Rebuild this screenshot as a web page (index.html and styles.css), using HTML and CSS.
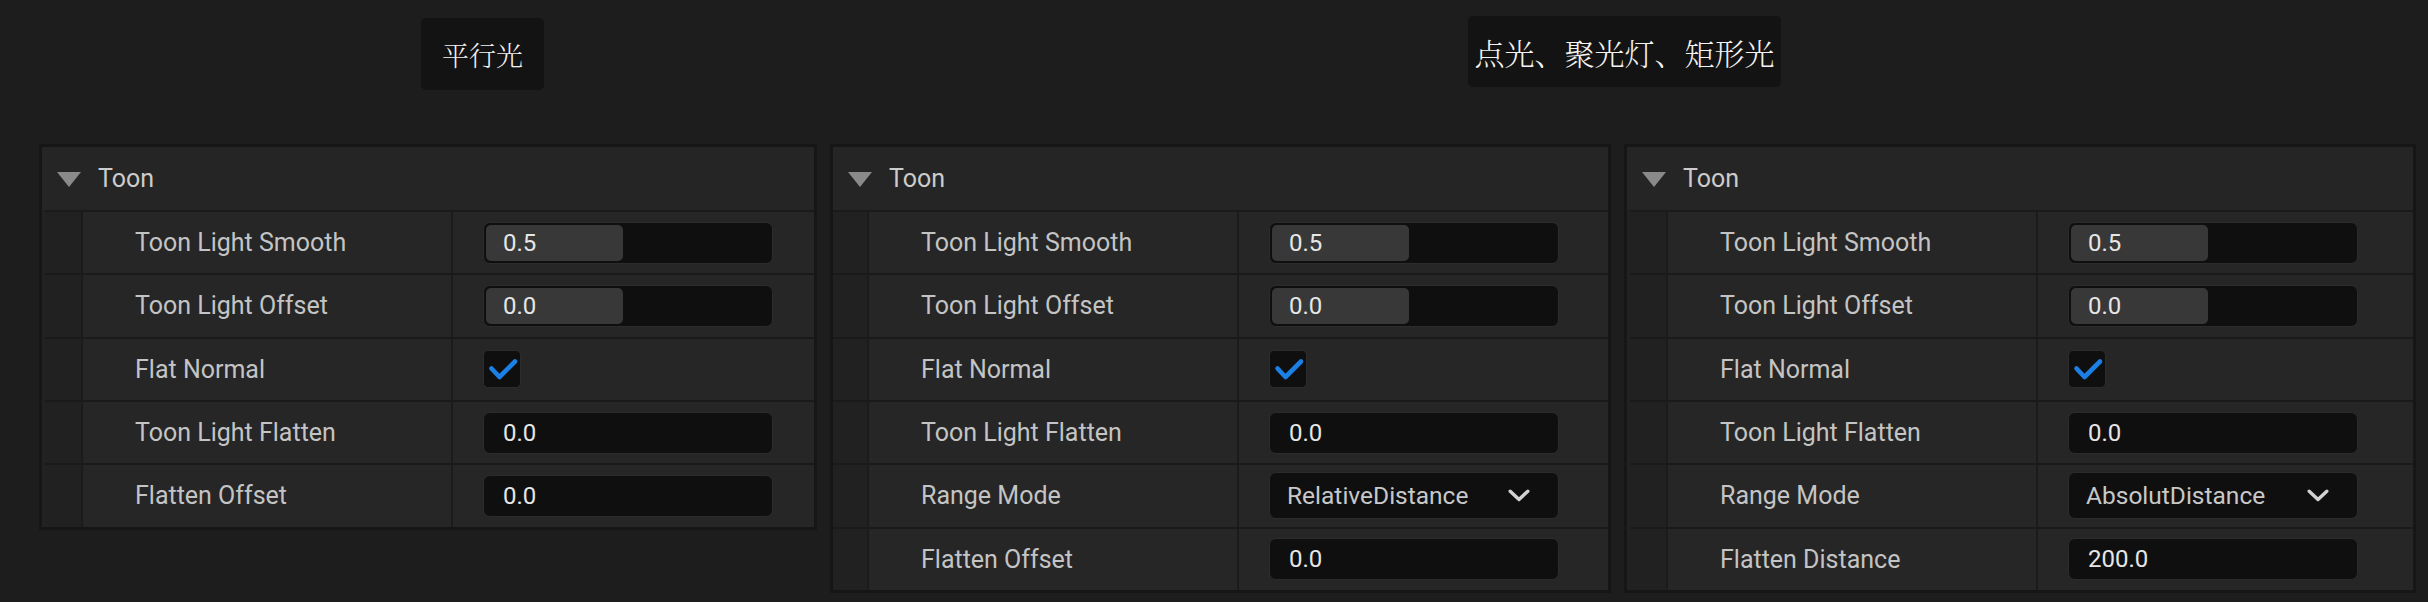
FILE: index.html
```html
<!DOCTYPE html>
<html lang="zh-CN">
<head>
<meta charset="utf-8">
<title>Toon Light Settings</title>
<link rel="stylesheet" href="styles.css">
</head>
<body>
<div class="page">
  <div class="captions">
    <div class="caption caption-dir">平行光</div>
    <div class="caption caption-point">点光、聚光灯、矩形光</div>
  </div>
  <div class="panels">
    <section class="panel panel-1">
      <div class="panel-head"><span class="tri"></span><span class="title">Toon</span></div>
      <div class="rows">
        <div class="row"><div class="strip"></div><div class="label">Toon Light Smooth</div><div class="value"><div class="box slider"><div class="fill">0.5</div></div></div></div>
        <div class="row"><div class="strip"></div><div class="label">Toon Light Offset</div><div class="value"><div class="box slider"><div class="fill">0.0</div></div></div></div>
        <div class="row"><div class="strip"></div><div class="label">Flat Normal</div><div class="value"><div class="check"><svg viewBox="0 0 38 38" width="38" height="38"><polyline points="8.5,18.5 16.5,27 32,11.5" fill="none" stroke="#1c7fe4" stroke-width="4.6" stroke-linecap="round" stroke-linejoin="round"/></svg></div></div></div>
        <div class="row"><div class="strip"></div><div class="label">Toon Light Flatten</div><div class="value"><div class="box text">0.0</div></div></div>
        <div class="row"><div class="strip"></div><div class="label">Flatten Offset</div><div class="value"><div class="box text">0.0</div></div></div>
      </div>
    </section>
    <section class="panel panel-2">
      <div class="panel-head"><span class="tri"></span><span class="title">Toon</span></div>
      <div class="rows">
        <div class="row"><div class="strip"></div><div class="label">Toon Light Smooth</div><div class="value"><div class="box slider"><div class="fill">0.5</div></div></div></div>
        <div class="row"><div class="strip"></div><div class="label">Toon Light Offset</div><div class="value"><div class="box slider"><div class="fill">0.0</div></div></div></div>
        <div class="row"><div class="strip"></div><div class="label">Flat Normal</div><div class="value"><div class="check"><svg viewBox="0 0 38 38" width="38" height="38"><polyline points="8.5,18.5 16.5,27 32,11.5" fill="none" stroke="#1c7fe4" stroke-width="4.6" stroke-linecap="round" stroke-linejoin="round"/></svg></div></div></div>
        <div class="row"><div class="strip"></div><div class="label">Toon Light Flatten</div><div class="value"><div class="box text">0.0</div></div></div>
        <div class="row"><div class="strip"></div><div class="label">Range Mode</div><div class="value"><div class="box combo"><span class="combo-text">RelativeDistance</span><svg class="chev" viewBox="0 0 22 13" width="22" height="13"><polyline points="2.2,2.2 11,10.5 19.8,2.2" fill="none" stroke="#d2d2d2" stroke-width="3.4" stroke-linecap="round" stroke-linejoin="round"/></svg></div></div></div>
        <div class="row"><div class="strip"></div><div class="label">Flatten Offset</div><div class="value"><div class="box text">0.0</div></div></div>
      </div>
    </section>
    <section class="panel panel-3">
      <div class="panel-head"><span class="tri"></span><span class="title">Toon</span></div>
      <div class="rows">
        <div class="row"><div class="strip"></div><div class="label">Toon Light Smooth</div><div class="value"><div class="box slider"><div class="fill">0.5</div></div></div></div>
        <div class="row"><div class="strip"></div><div class="label">Toon Light Offset</div><div class="value"><div class="box slider"><div class="fill">0.0</div></div></div></div>
        <div class="row"><div class="strip"></div><div class="label">Flat Normal</div><div class="value"><div class="check"><svg viewBox="0 0 38 38" width="38" height="38"><polyline points="8.5,18.5 16.5,27 32,11.5" fill="none" stroke="#1c7fe4" stroke-width="4.6" stroke-linecap="round" stroke-linejoin="round"/></svg></div></div></div>
        <div class="row"><div class="strip"></div><div class="label">Toon Light Flatten</div><div class="value"><div class="box text">0.0</div></div></div>
        <div class="row"><div class="strip"></div><div class="label">Range Mode</div><div class="value"><div class="box combo"><span class="combo-text">AbsolutDistance</span><svg class="chev" viewBox="0 0 22 13" width="22" height="13"><polyline points="2.2,2.2 11,10.5 19.8,2.2" fill="none" stroke="#d2d2d2" stroke-width="3.4" stroke-linecap="round" stroke-linejoin="round"/></svg></div></div></div>
        <div class="row"><div class="strip"></div><div class="label">Flatten Distance</div><div class="value"><div class="box text">200.0</div></div></div>
      </div>
    </section>
  </div>
</div>
</body>
</html>
```
FILE: styles.css
```css
* { box-sizing: border-box; }
html, body { margin: 0; padding: 0; }
body {
  background: #1d1d1d;
  width: 2428px;
  height: 602px;
  overflow: hidden;
  font-family: Roboto, "Liberation Sans", sans-serif;
}
.page { width: 2428px; height: 602px; }

.captions {
  display: flex;
  align-items: flex-start;
  height: 144px;
}
.caption {
  background: #131313;
  border-radius: 5px;
  color: #f2f2f2;
  font-family: "Noto Serif CJK SC", "Noto Sans CJK SC", "Noto Sans CJK JP", serif;
  font-weight: 300;
  display: flex;
  align-items: center;
  justify-content: center;
  white-space: nowrap;
}
.caption-dir {
  margin-left: 421px;
  margin-top: 18px;
  width: 123px;
  height: 72px;
  font-size: 27px;
}
.caption-point {
  margin-left: 924px;
  margin-top: 16px;
  width: 313px;
  height: 71px;
  font-size: 30px;
}

.panels {
  display: flex;
  align-items: flex-start;
  padding-left: 39px;
  gap: 13px;
}
.panel {
  background: #222222;
  border: 3px solid #161616;
}
.panel-1 { width: 778px; }
.panel-2 { width: 781px; }
.panel-3 { width: 792px; }

.panel-head {
  height: 63px;
  background: #252525;
  display: flex;
  align-items: center;
  padding-left: 15px;
  color: #cccccc;
  font-size: 25px;
}
.tri {
  width: 0;
  height: 0;
  border-left: 12px solid transparent;
  border-right: 12px solid transparent;
  border-top: 15px solid #8a8a8a;
  margin-right: 17px;
  margin-top: 2px;
}
.rows { margin-left: 3px; }
.panel-2 .rows { margin-left: 0; }
.panel-2 .strip { width: 36px; }
.row {
  display: flex;
  height: 63.33px;
  border-top: 2px solid #1a1a1a;
  background: #262626;
}
.strip {
  width: 38px;
  flex: none;
  background: #212121;
  border-right: 2px solid #1b1b1b;
}
.label {
  width: 370px;
  flex: none;
  border-right: 2px solid #1b1b1b;
  display: flex;
  align-items: center;
  padding-left: 52px;
  color: #c4c4c4;
  font-size: 25px;
  white-space: nowrap;
}
.value {
  flex: 1;
  display: flex;
  align-items: center;
  padding-left: 30px;
}
.box {
  width: 290px;
  height: 42px;
  background: #0f0f0f;
  border: 1px solid #2c2c2c;
  border-radius: 7px;
  color: #e6e6e6;
  font-size: 24px;
  display: flex;
  align-items: center;
}
.slider { padding: 2px; }
.fill {
  width: 137px;
  height: 100%;
  background: #383838;
  border-radius: 5px;
  display: flex;
  align-items: center;
  padding-left: 17px;
}
.text { padding-left: 19px; }
.combo {
  height: 47px;
  padding-left: 17px;
  padding-right: 28px;
  justify-content: space-between;
  color: #c8c8c8;
  font-size: 24.5px;
}
.chev { display: block; }
.check {
  width: 38px;
  height: 38px;
  background: #0f0f0f;
  border: 1px solid #2c2c2c;
  border-radius: 5px;
}
.check svg { display: block; margin: -1px; }
```
